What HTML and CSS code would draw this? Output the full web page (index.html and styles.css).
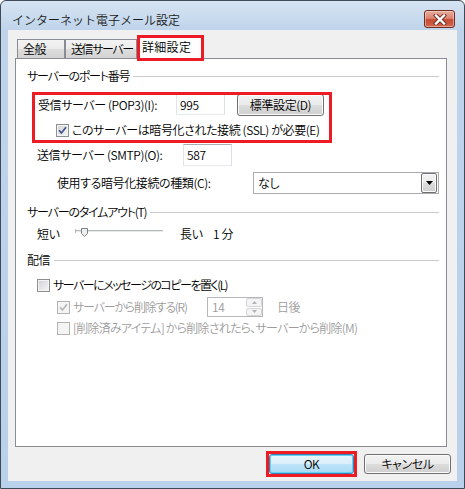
FILE: index.html
```html
<!DOCTYPE html>
<html lang="ja">
<head>
<meta charset="utf-8">
<title>インターネット電子メール設定</title>
<link rel="stylesheet" href="styles.css">
</head>
<body>
<div class="window">
  <div class="titlebar">
    <span class="title">インターネット電子メール設定</span>
    <span class="close">
      <svg width="14" height="11" viewBox="0 0 14 11">
        <path d="M3 1.5 L11 9.5 M11 1.5 L3 9.5" stroke="#6b3027" stroke-width="4.2" stroke-linecap="square" fill="none"/>
        <path d="M3 1.5 L11 9.5 M11 1.5 L3 9.5" stroke="#ffffff" stroke-width="2.4" stroke-linecap="square" fill="none"/>
      </svg>
    </span>
  </div>
  <div class="client">
    <div class="tabs">
      <div class="tab t1">全般</div>
      <div class="tab t2">送信サーバー</div>
      <div class="tab sel">詳細設定</div>
    </div>
    <div class="panel">
      <div class="gh"><span class="k12">サーバーのポート番号</span><i class="rule"></i></div>
      <div class="hl">
        <div class="row r-pop">
          <span class="lbl w-pop">受信サーバー (POP3)(I):</span>
          <span class="edit e-num">995</span>
          <span class="btn b-std">標準設定(D)</span>
        </div>
        <div class="row r-ssl">
          <span class="cb"><svg width="9" height="9" viewBox="0 0 9 9"><path d="M1 4.2 L3.4 7 L8 1.2" stroke="#3f5189" stroke-width="1.7" fill="none"/></svg></span>
          <span class="cbt">このサーバーは暗号化された接続 (SSL) が必要(E)</span>
        </div>
      </div>
      <div class="row r-smtp">
        <span class="lbl w-smtp">送信サーバー (SMTP)(O):</span>
        <span class="edit e-num e-smtp">587</span>
      </div>
      <div class="row r-enc">
        <span class="lbl w-enc">使用する暗号化接続の種類(C):</span>
        <span class="combo">
          <span class="combo-val">なし</span>
          <span class="combo-btn"><svg width="7" height="4" viewBox="0 0 7 4"><path d="M0 0 H7 L3.5 4 Z" fill="#000"/></svg></span>
        </span>
      </div>
      <div class="gh gh2"><span class="k12">サーバーのタイムアウト(T)</span><i class="rule"></i></div>
      <div class="row r-slider">
        <span class="s1">短い</span>
        <svg class="slider" width="88" height="10" viewBox="0 0 88 10">
          <rect x="0" y="2" width="88" height="1" fill="#b5b7ba"/>
          <rect x="0" y="3" width="88" height="1" fill="#e8e9eb"/>
          <rect x="0" y="1" width="1" height="4" fill="#b5b7ba"/>
          <path d="M6.5 0.5 H12.5 V5.5 L9.5 8.5 L6.5 5.5 Z" fill="#eeeeee" stroke="#7e8185"/>
        </svg>
        <span class="s2">長い</span>
        <span>1 分</span>
      </div>
      <div class="gh gh3"><span>配信</span><i class="rule"></i></div>
      <div class="row r-l">
        <span class="cb"></span>
        <span class="cbt k15">サーバーにメッセージのコピーを置く(L)</span>
      </div>
      <div class="row r-r dis">
        <span class="w-r">
          <span class="cb"><svg width="9" height="9" viewBox="0 0 9 9"><path d="M1 4.2 L3.4 7 L8 1.2" stroke="#b4b6b9" stroke-width="1.7" fill="none"/></svg></span>
          <span class="cbt k12">サーバーから削除する(R)</span>
        </span>
        <span class="spin">
          <span class="spin-val">14</span>
          <span class="spin-btns">
            <span class="sb"><svg width="5" height="3" viewBox="0 0 5 3"><path d="M0 3 H5 L2.5 0 Z" fill="#b0b2b5"/></svg></span>
            <span class="sb"><svg width="5" height="3" viewBox="0 0 5 3"><path d="M0 0 H5 L2.5 3 Z" fill="#b0b2b5"/></svg></span>
          </span>
        </span>
        <span class="days">日後</span>
      </div>
      <div class="row r-m dis">
        <span class="cb"></span>
        <span class="cbt k08">[削除済みアイテム] から削除されたら、サーバーから削除(M)</span>
      </div>
    </div>
    <div class="buttons">
      <span class="okwrap"><span class="btn b-ok">OK</span></span>
      <span class="btn b-cancel">キャンセル</span>
    </div>
  </div>
</div>
</body>
</html>
```
FILE: styles.css
```css
html, body {
  margin: 0;
  padding: 0;
  background: #ffffff;
}
body {
  font-family: "Noto Sans CJK JP", "Noto Sans", sans-serif;
  font-size: 12px;
  line-height: 16px;
  font-weight: 350;
  color: #000;
  font-feature-settings: "palt";
  letter-spacing: -0.4px;
}
.k08 { letter-spacing: -0.75px; }
.k12 { letter-spacing: -1.2px; }
.k15 { letter-spacing: -1.5px; }
.window {
  width: 465px;
  height: 489px;
  box-sizing: border-box;
  border: 1px solid #3e4a57;
  border-radius: 6px 6px 0 0;
  background: linear-gradient(#d6e4f2, #bfd4eb 29px, #b9d1ea);
  display: flex;
  flex-direction: column;
  overflow: hidden;
}
.titlebar {
  height: 29px;
  flex: none;
  display: flex;
  justify-content: space-between;
  align-items: flex-start;
  padding: 0 9px 0 11px;
}
.title {
  margin-top: 11px;
  font-feature-settings: normal;
  letter-spacing: 0;
  color: #1b1b1b;
}
.close {
  margin-top: 9px;
  width: 31px;
  height: 18px;
  box-sizing: border-box;
  border: 1px solid #6f2e24;
  border-radius: 3px;
  background: linear-gradient(#e9ab9b, #dc8571 45%, #c64a33 55%, #d0694f);
  box-shadow: inset 0 0 0 1px rgba(255, 235, 225, 0.45);
  display: flex;
  align-items: center;
  justify-content: center;
}
.client {
  flex: 1;
  margin: 0 7px 7px;
  background: #f0f0f0;
  display: flex;
  flex-direction: column;
  padding: 5px 0 7px;
}
.tabs {
  height: 23px;
  flex: none;
  display: flex;
  align-items: flex-end;
  padding-left: 9px;
}
.tab {
  height: 19px;
  box-sizing: border-box;
  border: 1px solid #898c95;
  border-bottom: none;
  background: linear-gradient(#f3f3f3, #ebebeb 50%, #dddddd 50%, #d3d3d3);
  padding-left: 5px;
  line-height: 18px;
  white-space: nowrap;
  overflow: hidden;
}
.t1 { width: 48px; }
.t2 { width: 72px; letter-spacing: -1.4px; }
.tab.sel {
  width: 67px;
  height: 26px;
  margin-bottom: -3px;
  background: #ffffff;
  padding: 3px 0 0 4px;
  line-height: 16px;
  letter-spacing: 0.3px;
  position: relative;
  z-index: 1;
  outline: 3px solid #ed1c24;
  outline-offset: -3px;
}
.panel {
  height: 389px;
  flex: none;
  box-sizing: border-box;
  border: 1px solid #898c95;
  background: #ffffff;
  margin: 0 10px 0 7px;
  padding: 9px 7px 0 11px;
  display: flex;
  flex-direction: column;
}
.gh {
  height: 16px;
  display: flex;
  align-items: center;
  gap: 4px;
  white-space: nowrap;
}
.gh .rule {
  flex: 1;
  height: 1px;
  background: #c9cbce;
}
.gh2 { margin-top: 10px; }
.gh3 { margin-top: 10px; }
.hl {
  margin: 8px 0 0 5px;
  width: 300px;
  height: 51px;
  box-sizing: border-box;
  padding: 2px 0 0 0;
  outline: 3px solid #ed1c24;
  outline-offset: -3px;
}
.row {
  display: flex;
  align-items: center;
  white-space: nowrap;
}
.r-pop { height: 22px; padding-left: 6px; align-items: flex-start; }
.r-pop .lbl { line-height: 21px; }
.w-pop { width: 138px; }
.r-ssl { height: 16px; margin-top: 6px; padding-left: 24px; }
.edit {
  box-sizing: border-box;
  width: 49px;
  height: 21px;
  border: 1px solid;
  border-color: #abadb3 #dbdfe6 #e3e9ef #e2e3ea;
  background: #fff;
  padding-left: 3px;
  line-height: 19px;
}
.btn {
  box-sizing: border-box;
  border: 1px solid #707070;
  border-radius: 3px;
  background: linear-gradient(#f2f2f2, #ebebeb 50%, #dddddd 50%, #cfcfcf);
  box-shadow: inset 0 0 0 1px #fbfbfb;
  display: flex;
  align-items: center;
  justify-content: center;
  white-space: nowrap;
}
.b-std {
  width: 87px;
  height: 22px;
  margin-left: 12px;
}
.cb {
  width: 13px;
  height: 13px;
  flex: none;
  box-sizing: border-box;
  border: 1px solid #8e8f8f;
  background: linear-gradient(135deg, #cfd2d7, #f7f7f7);
  box-shadow: inset 0 0 0 1px #f4f4f4;
  display: flex;
  align-items: center;
  justify-content: center;
}
.cbt { margin-left: 3px; }
.r-smtp { height: 22px; margin: 1px 0 0 10px; }
.w-smtp { width: 146px; }
.e-smtp { height: 22px; }
.r-enc { height: 22px; margin: 6px 0 0 30px; }
.w-enc { width: 196px; }
.combo {
  box-sizing: border-box;
  width: 186px;
  height: 22px;
  border: 1px solid #a9abaf;
  background: #fff;
  display: flex;
  justify-content: space-between;
  align-items: stretch;
  padding: 0 1px 0 4px;
}
.combo-val { line-height: 19px; }
.combo-btn {
  width: 16px;
  box-sizing: border-box;
  border: 1px solid #707070;
  border-radius: 2px;
  background: linear-gradient(#f2f2f2, #ebebeb 50%, #dddddd 50%, #cfcfcf);
  box-shadow: inset 0 0 0 1px #fbfbfb;
  display: flex;
  align-items: center;
  justify-content: center;
}
.r-slider { height: 16px; margin: 6px 0 0 10px; }
.s1 { width: 38px; }
.slider { display: block; margin-top: -2px; }
.s2 { width: 33px; margin-left: 17px; }
.r-l { height: 16px; margin: 9px 0 0 10px; }
.r-r { height: 20px; margin: 4px 0 0 30px; }
.w-r { width: 150px; display: flex; align-items: center; }
.r-m { height: 16px; margin: 3px 0 0 30px; }
.dis { color: #9c9c9c; }
.dis .cb {
  border-color: #b3b3b3;
  background: #f4f4f4;
  box-shadow: none;
}
.spin {
  box-sizing: border-box;
  width: 56px;
  height: 20px;
  border: 1px solid #b6b8bb;
  background: #fff;
  display: flex;
}
.spin-val {
  flex: 1;
  padding-left: 4px;
  line-height: 18px;
}
.spin-btns {
  width: 16px;
  display: flex;
  flex-direction: column;
  gap: 1px;
}
.sb {
  flex: 1;
  box-sizing: border-box;
  border: 1px solid #d4d6d8;
  border-radius: 2px;
  background: #f4f4f4;
  display: flex;
  align-items: center;
  justify-content: center;
}
.days { margin-left: 14px; }
.buttons {
  margin-top: 7px;
  height: 20px;
  flex: none;
  display: flex;
  justify-content: flex-end;
  gap: 10px;
  padding-right: 6px;
}
.okwrap {
  display: flex;
  outline: 3px solid #ed1c24;
}
.b-ok {
  width: 85px;
  border-color: #3c7fb1;
  background: linear-gradient(#e9f5fc, #d9eefb 50%, #bee4f8 50%, #a9dbf6);
  box-shadow: inset 0 0 0 1px #62d3f8;
}
.b-cancel { width: 87px; }
```
